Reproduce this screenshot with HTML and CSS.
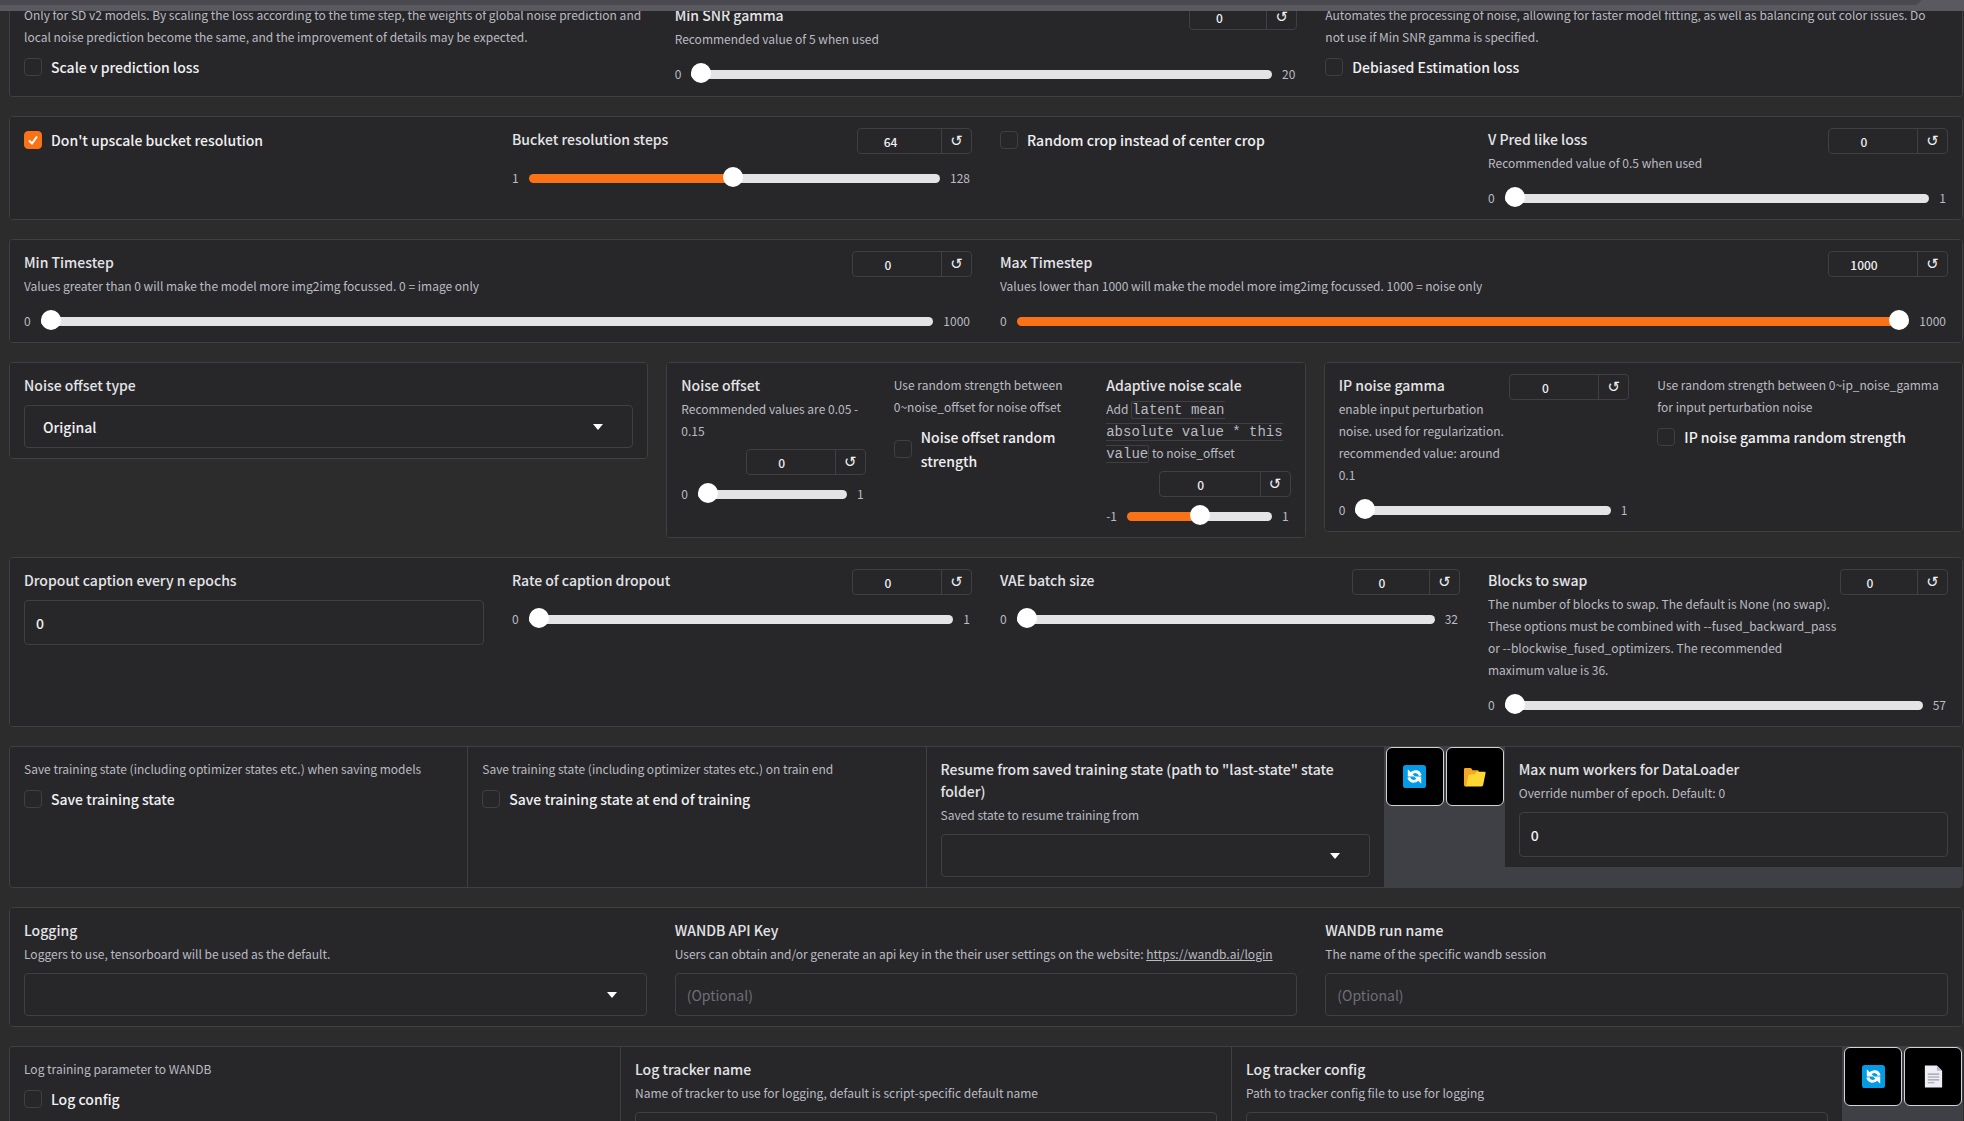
FILE: index.html
```html
<!DOCTYPE html>
<html lang="en">
<head>
    <meta charset="UTF-8">
    <meta name="viewport" content="width=device-width, initial-scale=1.0">
    <title>Training parameters</title>
    <link rel="stylesheet" href="styles.css">
</head>
<body>
    <div class="top-bar"></div>
    <main class="page">

        <section class="card cols-3 card-first">
            <div class="block">
                <p class="info">Only for SD v2 models. By scaling the loss according to the time step, the weights of global noise prediction and local noise prediction become the same, and the improvement of details may be expected.</p>
                <label class="check"><input type="checkbox"><span>Scale v prediction loss</span></label>
            </div>
            <div class="block">
                <div class="head">
                    <div class="text">
                        <label class="title" for="snr">Min SNR gamma</label>
                        <p class="info">Recommended value of 5 when used</p>
                    </div>
                    <div class="number small"><input type="text" value="0" aria-label="Min SNR gamma value"><button aria-label="Reset">↺</button></div>
                </div>
                <div class="slider"><span>0</span><input type="range" id="snr" min="0" max="20" value="0" style="--fill: 0%"><span>20</span></div>
            </div>
            <div class="block">
                <p class="info">Automates the processing of noise, allowing for faster model fitting, as well as balancing out color issues. Do not use if Min SNR gamma is specified.</p>
                <label class="check"><input type="checkbox"><span>Debiased Estimation loss</span></label>
            </div>
        </section>

        <section class="card cols-4">
            <div class="block">
                <label class="check"><input type="checkbox" checked><span>Don't upscale bucket resolution</span></label>
            </div>
            <div class="block">
                <div class="head">
                    <div class="text"><label class="title" for="bucket">Bucket resolution steps</label></div>
                    <div class="number medium"><input type="text" value="64" aria-label="Bucket resolution steps value"><button aria-label="Reset">↺</button></div>
                </div>
                <div class="slider"><span>1</span><input type="range" id="bucket" min="1" max="128" value="64" style="--fill: 50%"><span>128</span></div>
            </div>
            <div class="block">
                <label class="check"><input type="checkbox"><span>Random crop instead of center crop</span></label>
            </div>
            <div class="block">
                <div class="head">
                    <div class="text">
                        <label class="title" for="vpred">V Pred like loss</label>
                        <p class="info">Recommended value of 0.5 when used</p>
                    </div>
                    <div class="number"><input type="text" value="0" aria-label="V Pred like loss value"><button aria-label="Reset">↺</button></div>
                </div>
                <div class="slider"><span>0</span><input type="range" id="vpred" min="0" max="1" step="0.01" value="0" style="--fill: 0%"><span>1</span></div>
            </div>
        </section>

        <section class="card cols-2">
            <div class="block">
                <div class="head">
                    <div class="text">
                        <label class="title" for="min-step">Min Timestep</label>
                        <p class="info">Values greater than 0 will make the model more img2img focussed. 0 = image only</p>
                    </div>
                    <div class="number"><input type="text" value="0" aria-label="Min Timestep value"><button aria-label="Reset">↺</button></div>
                </div>
                <div class="slider"><span>0</span><input type="range" id="min-step" min="0" max="1000" value="0" style="--fill: 0%"><span>1000</span></div>
            </div>
            <div class="block">
                <div class="head">
                    <div class="text">
                        <label class="title" for="max-step">Max Timestep</label>
                        <p class="info">Values lower than 1000 will make the model more img2img focussed. 1000 = noise only</p>
                    </div>
                    <div class="number"><input type="text" value="1000" aria-label="Max Timestep value"><button aria-label="Reset">↺</button></div>
                </div>
                <div class="slider"><span>0</span><input type="range" id="max-step" min="0" max="1000" value="1000" style="--fill: 100%"><span>1000</span></div>
            </div>
        </section>

        <div class="panels">
            <section class="card">
                <div class="block">
                    <label class="title" for="offset-type">Noise offset type</label>
                    <select class="field" id="offset-type"><option>Original</option></select>
                </div>
            </section>
            <section class="card cols-3">
                <div class="block">
                    <div class="head stacked">
                        <div class="text">
                            <label class="title" for="noise-offset">Noise offset</label>
                            <p class="info">Recommended values are 0.05 - 0.15</p>
                        </div>
                        <div class="number"><input type="text" value="0" aria-label="Noise offset value"><button aria-label="Reset">↺</button></div>
                    </div>
                    <div class="slider"><span>0</span><input type="range" id="noise-offset" min="0" max="1" step="0.01" value="0" style="--fill: 0%"><span>1</span></div>
                </div>
                <div class="block">
                    <p class="info">Use random strength between 0~noise_offset for noise offset</p>
                    <label class="check"><input type="checkbox"><span>Noise offset random strength</span></label>
                </div>
                <div class="block">
                    <div class="head stacked">
                        <div class="text">
                            <label class="title" for="adaptive">Adaptive noise scale</label>
                            <p class="info">Add <code>latent mean absolute value * this value</code> to noise_offset</p>
                        </div>
                        <div class="number large"><input type="text" value="0" aria-label="Adaptive noise scale value"><button aria-label="Reset">↺</button></div>
                    </div>
                    <div class="slider"><span>-1</span><input type="range" id="adaptive" min="-1" max="1" step="0.001" value="0" style="--fill: 50%"><span>1</span></div>
                </div>
            </section>
            <section class="card cols-2">
                <div class="block">
                    <div class="head">
                        <div class="text">
                            <label class="title" for="ip-noise">IP noise gamma</label>
                            <p class="info">enable input perturbation noise. used for regularization. recommended value: around 0.1</p>
                        </div>
                        <div class="number"><input type="text" value="0" aria-label="IP noise gamma value"><button aria-label="Reset">↺</button></div>
                    </div>
                    <div class="slider"><span>0</span><input type="range" id="ip-noise" min="0" max="1" step="0.01" value="0" style="--fill: 0%"><span>1</span></div>
                </div>
                <div class="block">
                    <p class="info">Use random strength between 0~ip_noise_gamma for input perturbation noise</p>
                    <label class="check"><input type="checkbox"><span>IP noise gamma random strength</span></label>
                </div>
            </section>
        </div>

        <section class="card cols-4">
            <div class="block">
                <label class="title" for="dropout">Dropout caption every n epochs</label>
                <input class="field tall" type="text" id="dropout" value="0">
            </div>
            <div class="block">
                <div class="head">
                    <div class="text"><label class="title" for="caption-rate">Rate of caption dropout</label></div>
                    <div class="number"><input type="text" value="0" aria-label="Rate of caption dropout value"><button aria-label="Reset">↺</button></div>
                </div>
                <div class="slider"><span>0</span><input type="range" id="caption-rate" min="0" max="1" step="0.01" value="0" style="--fill: 0%"><span>1</span></div>
            </div>
            <div class="block">
                <div class="head">
                    <div class="text"><label class="title" for="vae">VAE batch size</label></div>
                    <div class="number small"><input type="text" value="0" aria-label="VAE batch size value"><button aria-label="Reset">↺</button></div>
                </div>
                <div class="slider"><span>0</span><input type="range" id="vae" min="0" max="32" value="0" style="--fill: 0%"><span>32</span></div>
            </div>
            <div class="block">
                <div class="head">
                    <div class="text">
                        <label class="title" for="swap">Blocks to swap</label>
                        <p class="info">The number of blocks to swap. The default is None (no swap). These options must be combined with --fused_backward_pass or --blockwise_fused_optimizers. The recommended maximum value is 36.</p>
                    </div>
                    <div class="number small"><input type="text" value="0" aria-label="Blocks to swap value"><button aria-label="Reset">↺</button></div>
                </div>
                <div class="slider"><span>0</span><input type="range" id="swap" min="0" max="57" value="0" style="--fill: 0%"><span>57</span></div>
            </div>
        </section>

        <section class="card joined state-row">
            <div class="block">
                <p class="info">Save training state (including optimizer states etc.) when saving models</p>
                <label class="check"><input type="checkbox"><span>Save training state</span></label>
            </div>
            <div class="block">
                <p class="info">Save training state (including optimizer states etc.) on train end</p>
                <label class="check"><input type="checkbox"><span>Save training state at end of training</span></label>
            </div>
            <div class="block">
                <label class="title" for="resume">Resume from saved training state (path to "last-state" state folder)</label>
                <p class="info">Saved state to resume training from</p>
                <select class="field" id="resume"><option></option></select>
            </div>
            <button class="tool" aria-label="Refresh">
                <svg viewBox="0 0 24 24"><use href="#refresh"/></svg>
            </button>
            <button class="tool" aria-label="Open folder">
                <svg viewBox="0 0 24 24">
                    <path fill="#f9a825" d="M1 4.500q0-1.500 1.500-1.500h5q1 0 1.500 1l.8 1.500h5.200q1.500 0 1.500 1.500v8L3 22.500q-2 0-2-2z"/>
                    <path fill="#fdd835" d="M5.500 11.500Q6 10 7.500 10l5-.5 2-2.500h8q1.500 0 1 1.500l-2.500 12.500q-.5 1.500-2 1.500H2.500q1-.5 1.300-2z"/>
                </svg>
            </button>
            <div class="block short">
                <label class="title" for="workers">Max num workers for DataLoader</label>
                <p class="info">Override number of epoch. Default: 0</p>
                <input class="field tall" type="text" id="workers" value="0">
            </div>
        </section>

        <section class="card cols-3">
            <div class="block">
                <label class="title" for="logging">Logging</label>
                <p class="info">Loggers to use, tensorboard will be used as the default.</p>
                <select class="field" id="logging"><option></option></select>
            </div>
            <div class="block">
                <label class="title" for="api-key">WANDB API Key</label>
                <p class="info">Users can obtain and/or generate an api key in the their user settings on the website: <a href="https://wandb.ai/login">https://wandb.ai/login</a></p>
                <input class="field" type="text" id="api-key" placeholder="(Optional)">
            </div>
            <div class="block">
                <label class="title" for="run-name">WANDB run name</label>
                <p class="info">The name of the specific wandb session</p>
                <input class="field" type="text" id="run-name" placeholder="(Optional)">
            </div>
        </section>

        <section class="card joined tracker-row">
            <div class="block">
                <p class="info">Log training parameter to WANDB</p>
                <label class="check"><input type="checkbox"><span>Log config</span></label>
            </div>
            <div class="block">
                <label class="title" for="tracker-name">Log tracker name</label>
                <p class="info">Name of tracker to use for logging, default is script-specific default name</p>
                <input class="field" type="text" id="tracker-name">
            </div>
            <div class="block">
                <label class="title" for="tracker-config">Log tracker config</label>
                <p class="info">Path to tracker config file to use for logging</p>
                <select class="field" id="tracker-config"><option></option></select>
            </div>
            <button class="tool" aria-label="Refresh">
                <svg viewBox="0 0 24 24"><use href="#refresh"/></svg>
            </button>
            <button class="tool" aria-label="Open file">
                <svg viewBox="0 0 24 24">
                    <path fill="#eeeef5" d="M3 .500h12.500L21 6v17.500H3z"/>
                    <path fill="#b9b9c6" d="M15.500 .500 21 6h-5.500z"/>
                    <path stroke="#9a9aab" stroke-width="1.200" d="M6 9.500h12M6 12.500h12M6 15.500h12M6 18.500h7"/>
                </svg>
            </button>
        </section>
    </main>

    <svg class="sprite" aria-hidden="true">
        <symbol id="refresh" viewBox="0 0 24 24">
            <rect width="24" height="24" rx="3" fill="#039be5"/>
            <path fill="none" stroke="#fff" stroke-width="3" d="M8 9.500Q10.500 6.500 14 7q3 .5 4 4M16 14.500q-2.500 3-6 2.500-3-.5-4-4"/>
            <path fill="#fff" d="M5 4.500V12h7.500zM19 19.500V12h-7.500z"/>
        </symbol>
    </svg>
</body>
</html>
```
FILE: styles.css
```css
* {
    box-sizing: border-box;
}
body {
    margin: 0;
    background-color: #2c2c2d;
    color: #f0f0f2;
    font-family: "Noto Sans CJK SC", "Noto Sans", sans-serif;
    font-size: 14px;
    overflow: hidden;
}
.top-bar {
    position: fixed;
    top: 0;
    left: 0;
    right: 0;
    z-index: 2;
    height: 11px;
    background: linear-gradient(#4a494f 5px, #5a595f 5px);
}
.top-bar::after {
    content: "";
    position: absolute;
    top: 0;
    right: 0;
    width: 48px;
    height: 5px;
    background-color: #5a595f;
    clip-path: polygon(6px 0, 100% 0, 100% 100%, 0 100%);
}
.page {
    display: flex;
    flex-direction: column;
    gap: 19px;
    padding: 0 1px 0 9px;
}
.card {
    border: 1px solid #3f3f44;
    border-radius: 4px;
    background-color: #27272a;
    overflow: hidden;
}
.cols-2, .cols-3, .cols-4 {
    display: grid;
}
.cols-2 {
    grid-template-columns: repeat(2, minmax(0, 1fr));
}
.cols-3 {
    grid-template-columns: repeat(3, minmax(0, 1fr));
}
.cols-4 {
    grid-template-columns: repeat(4, minmax(0, 1fr));
}
.panels {
    display: grid;
    grid-template-columns: repeat(3, minmax(0, 1fr));
    align-items: start;
    gap: 18px;
}
.block {
    padding: 11px 14px 10px;
    background-color: #27272a;
}
.card-first {
    border-top: 0;
    border-radius: 0 0 4px 4px;
}
.card-first .block {
    padding-top: 4px;
    padding-bottom: 11px;
}
.card-first .info {
    padding-right: 4px;
}

/* texts */
.title {
    display: block;
    margin-bottom: 2px;
    font-size: 14px;
    font-weight: 500;
    line-height: 22px;
    color: #e4e4e7;
}
.info {
    margin: 0;
    font-size: 12px;
    line-height: 22px;
    color: #bbbbc2;
}
.info a {
    color: inherit;
}
.info code {
    border: 1px solid #3f3f44;
    border-radius: 2px;
    font-family: "Liberation Mono", monospace;
    font-size: 14px;
    line-height: 1;
}

/* checkboxes */
.check {
    display: flex;
    align-items: center;
    gap: 9px;
    font-size: 14px;
    font-weight: 500;
    line-height: 24px;
}
.info + .check {
    margin-top: 7px;
}
.check input {
    flex: none;
    appearance: none;
    width: 18px;
    height: 18px;
    margin: 0;
    border: 1px solid #3f3f44;
    border-radius: 4px;
}
.check input:checked {
    border-color: #f97316;
    background: #f97316 url('data:image/svg+xml,%3Csvg xmlns="http://www.w3.org/2000/svg" viewBox="0 0 16 16"%3E%3Cpath d="M4 8.500l3 3 5-7" fill="none" stroke="white" stroke-width="2"/%3E%3C/svg%3E') center / 16px;
}

/* sliders */
.head {
    display: flex;
    align-items: flex-start;
    margin-bottom: 13px;
}
.head .text {
    flex: 1;
    min-width: 0;
}
.head.stacked {
    flex-direction: column;
    align-items: flex-end;
    gap: 7px;
    margin-bottom: 8px;
}
.head.stacked .text {
    width: 100%;
}
.number {
    display: flex;
    flex: none;
    width: 120px;
    height: 26px;
    border: 1px solid #3f3f44;
    border-radius: 4px;
}
.number.small {
    width: 108px;
}
.number.medium {
    width: 115px;
}
.number.large {
    width: 132px;
}
.number input {
    flex: 1;
    min-width: 0;
    padding: 0 18px 0 0;
    border: 0;
    background: none;
    color: #f0f0f2;
    font: inherit;
    font-size: 12px;
    font-weight: 500;
    text-align: center;
}
.number button {
    width: 30px;
    padding: 0;
    border: 0;
    border-left: 1px solid #3f3f44;
    background: none;
    color: #f0f0f2;
    font-family: "DejaVu Sans", sans-serif;
    font-size: 15px;
    line-height: 22px;
}
.slider {
    display: flex;
    align-items: center;
    gap: 10px;
    padding-right: 2px;
    font-size: 12px;
    line-height: 22px;
    color: #bbbbc2;
}
.slider input {
    flex: 1;
    min-width: 0;
    height: 20px;
    margin: 0;
    appearance: none;
    background: none;
}
.slider input::-webkit-slider-runnable-track {
    height: 9px;
    border-radius: 5px;
    background: linear-gradient(to right, #f97316 var(--fill), #e4e4e7 var(--fill));
}
.slider input::-webkit-slider-thumb {
    appearance: none;
    width: 20px;
    height: 20px;
    margin-top: -7px;
    border-radius: 50%;
    background-color: #fff;
}

/* text boxes and drop-downs */
.field {
    display: block;
    width: 100%;
    height: 43px;
    padding: 0 11px;
    border: 1px solid #3f3f44;
    border-radius: 4px;
    background-color: #27272a;
    color: #f0f0f2;
    font: inherit;
    font-weight: 500;
}
.field.tall {
    height: 45px;
}
.field::placeholder {
    color: #6f6f75;
    font-weight: 400;
}
.title + .field {
    margin-top: 9px;
}
.info + .field {
    margin-top: 8px;
}
select.field {
    padding: 0 18px;
    appearance: none;
    background-image: url('data:image/svg+xml,%3Csvg xmlns="http://www.w3.org/2000/svg" viewBox="0 0 10 6"%3E%3Cpath d="M0 0h10L5 6z" fill="white"/%3E%3C/svg%3E');
    background-repeat: no-repeat;
    background-position: right 29px center;
    background-size: 10px 6px;
}

/* rows of blocks with divider lines and tool buttons */
.joined {
    display: grid;
    gap: 1px;
    background-color: #3f3f46;
}
.state-row {
    grid-template-columns: repeat(3, minmax(0, 1fr)) auto auto minmax(0, 1fr);
}
.tracker-row {
    grid-template-columns: repeat(3, minmax(0, 1fr)) auto auto;
}
.short {
    align-self: start;
}
.tool {
    display: flex;
    align-items: center;
    justify-content: center;
    align-self: start;
    width: 58px;
    height: 59px;
    margin-left: 1px;
    padding: 0;
    border: 1px solid #d4d4d8;
    border-radius: 6px;
    background-color: #000;
}
.tool svg {
    width: 23px;
    height: 23px;
}
.sprite {
    position: absolute;
    width: 0;
    height: 0;
}
```
